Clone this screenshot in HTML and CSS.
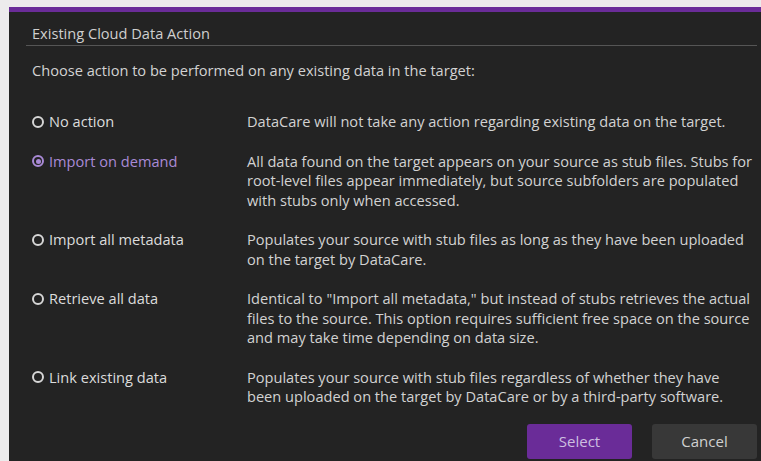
FILE: index.html
```html
<!DOCTYPE html>
<html lang="en">
<head>
<meta charset="utf-8">
<title>Existing Cloud Data Action</title>
<link rel="stylesheet" href="styles.css">
</head>
<body>
<div class="dialog">
  <div class="dialog-header">
    <div class="dialog-title">Existing Cloud Data Action</div>
  </div>
  <div class="dialog-body">
    <p class="intro">Choose action to be performed on any existing data in the target:</p>
    <div class="options">
      <label class="option-label"><span class="radio"></span>No action</label>
      <div class="option-desc">DataCare will not take any action regarding existing data on the target.</div>

      <label class="option-label is-selected"><span class="radio"></span>Import on demand</label>
      <div class="option-desc">All data found on the target appears on your source as stub files. Stubs for root-level files appear immediately, but source subfolders are populated with stubs only when accessed.</div>

      <label class="option-label"><span class="radio"></span>Import all metadata</label>
      <div class="option-desc">Populates your source with stub files as long as they have been uploaded on the target by DataCare.</div>

      <label class="option-label"><span class="radio"></span>Retrieve all data</label>
      <div class="option-desc">Identical to "Import all metadata," but instead of stubs retrieves the actual files to the source. This option requires sufficient free space on the source and may take time depending on data size.</div>

      <label class="option-label"><span class="radio"></span>Link existing data</label>
      <div class="option-desc">Populates your source with stub files regardless of whether they have been uploaded on the target by DataCare or by a third-party software.</div>
    </div>
    <div class="actions">
      <button class="btn btn-primary">Select</button>
      <button class="btn btn-secondary">Cancel</button>
    </div>
  </div>
</div>
</body>
</html>
```

FILE: styles.css
```css
html, body {
  margin: 0;
  padding: 0;
  background: #ecebec;
  height: 100%;
  overflow: hidden;
}

body {
  padding: 7px 0 0 9px;
  box-sizing: border-box;
  font-family: "Open Sans", "Noto Sans", sans-serif;
  font-size: 14.6px;
  line-height: 19.5px;
  color: #d2d2d2;
}

.dialog {
  background: #232323;
  border-top: 5px solid #6a2c98;
  height: 100%;
  box-sizing: border-box;
}

.dialog-header {
  margin: 0 4px 0 17px;
  padding: 12px 0 1px 6px;
  border-bottom: 1px solid #555555;
}

.dialog-title {
  color: #cfcfcf;
}

.dialog-body {
  padding: 0 4px 0 23px;
}

.intro {
  margin: 15px 0 0;
}

.options {
  display: grid;
  grid-template-columns: 215px 1fr;
  row-gap: 20px;
  margin-top: 32px;
}

.option-label {
  display: flex;
  align-items: center;
  height: 19.5px;
  color: #dcdcdc;
}

.option-label.is-selected {
  color: #a98ad6;
}

.radio {
  width: 8px;
  height: 8px;
  border: 2px solid #d6d6d6;
  border-radius: 50%;
  margin: 0 5px 0 0;
  flex: none;
  position: relative;
}

.is-selected .radio {
  border-color: #a98ad6;
}

.is-selected .radio::after {
  content: "";
  position: absolute;
  left: 1.5px;
  top: 1.5px;
  width: 5px;
  height: 5px;
  border-radius: 50%;
  background: #a98ad6;
}

.option-desc {
  color: #d2d2d2;
}

.actions {
  display: flex;
  justify-content: flex-end;
  gap: 20px;
  margin-top: 17px;
}

.btn {
  width: 105px;
  height: 35px;
  border: none;
  border-radius: 3px;
  font-family: inherit;
  font-size: 15px;
  color: #d0d0d0;
}

.btn-primary {
  background: #6a2c98;
  color: #cdbfe0;
}

.btn-secondary {
  background: #383838;
}
```
